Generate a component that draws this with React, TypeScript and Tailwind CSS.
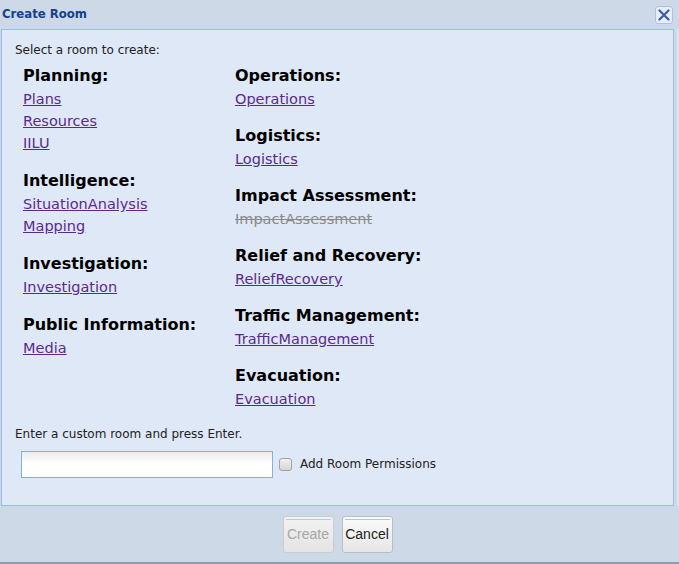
import React from "react";

const font = { fontFamily: "'DejaVu Sans', sans-serif" };

type Group = { title: string; links: { label: string; disabled?: boolean }[] };

const left: Group[] = [
  { title: "Planning:", links: [{ label: "Plans" }, { label: "Resources" }, { label: "IILU" }] },
  { title: "Intelligence:", links: [{ label: "SituationAnalysis" }, { label: "Mapping" }] },
  { title: "Investigation:", links: [{ label: "Investigation" }] },
  { title: "Public Information:", links: [{ label: "Media" }] },
];

const right: Group[] = [
  { title: "Operations:", links: [{ label: "Operations" }] },
  { title: "Logistics:", links: [{ label: "Logistics" }] },
  { title: "Impact Assessment:", links: [{ label: "ImpactAssessment", disabled: true }] },
  { title: "Relief and Recovery:", links: [{ label: "ReliefRecovery" }] },
  { title: "Traffic Management:", links: [{ label: "TrafficManagement" }] },
  { title: "Evacuation:", links: [{ label: "Evacuation" }] },
];

function GroupBlock({ g, wide }: { g: Group; wide?: boolean }) {
  return (
    <div className={wide ? "mb-[15px] flex flex-col items-start" : "mb-[14px] flex flex-col items-start"}>
      <div className="text-[16px] font-bold leading-[24px] text-black">{g.title}</div>
      {g.links.map((l) =>
        l.disabled ? (
          <span key={l.label} className="text-[14.5px] leading-[22px] text-[#8a8a8a] line-through">
            {l.label}
          </span>
        ) : (
          <a key={l.label} href="#" className="text-[14.5px] leading-[22px] text-[#5b2a8e] underline">
            {l.label}
          </a>
        )
      )}
    </div>
  );
}

export default function App() {
  return (
    <div className="w-[679px] h-[564px] bg-[#cdd9e7] flex flex-col overflow-hidden" style={font}>
      {/* title bar */}
      <div className="h-[29px] flex items-start justify-between">
        <div
          className="pl-[2px] pt-[6px] text-[13px] font-bold leading-[16px] text-[#15428b]"
          style={{ fontFamily: "'DejaVu Sans Condensed', 'DejaVu Sans', sans-serif" }}
        >
          Create Room
        </div>
        <div className="mt-[6px] mr-[6px] w-[18px] h-[18px] rounded-[3px] border border-[#a9c1e3] bg-[#e6edf8] flex items-center justify-center">
          <svg width="12" height="12" viewBox="0 0 12 12">
            <path d="M1.5 1.5 L10.5 10.5 M10.5 1.5 L1.5 10.5" stroke="#3d5d9e" strokeWidth="2.2" strokeLinecap="round" />
          </svg>
        </div>
      </div>
      {/* panel */}
      <div className="flex">
        <div className="ml-[1px] w-[673px] h-[477px] border border-[#99bbe8] bg-[#dfe8f6] flex flex-col pl-[13px] pt-[13px]">
          <div className="text-[12px] leading-[15px] text-[#222]">Select a room to create:</div>
          <div className="mt-[6px] pl-[8px] flex">
            <div className="w-[212px] flex flex-col">
              {left.map((g) => (
                <GroupBlock key={g.title} g={g} wide />
              ))}
            </div>
            <div className="flex flex-col">
              {right.map((g) => (
                <GroupBlock key={g.title} g={g} />
              ))}
            </div>
          </div>
          <div className="mt-[3px] text-[12px] leading-[15px] text-[#222]">Enter a custom room and press Enter.</div>
          <div className="mt-[9px] ml-[6px] flex items-center">
            <input
              type="text"
              className="w-[252px] h-[27px] border border-[#85b0dc] bg-[linear-gradient(to_bottom,#e9eaeb,#ffffff_45%)] outline-none"
            />
            <span className="ml-[6px] w-[13px] h-[13px] rounded-[3px] border border-[#a3a3a3] bg-[linear-gradient(to_bottom,#f0f0f0,#d6d6d6)]" />
            <span className="ml-[8px] text-[12px] leading-[15px] text-[#222]">Add Room Permissions</span>
          </div>
        </div>
        <div className="ml-[3px] w-[2px] bg-[#dbe4ef]" />
      </div>
      {/* footer */}
      <div className="flex-1 flex justify-center pt-[10px] pr-[4px] gap-[8px] border-b-[2px] border-[#8c9bb0]">
        <button
          className="relative w-[51px] h-[37px] rounded-[3px] border border-[#c9ccd0] bg-[linear-gradient(to_bottom,#f2f2f2,#e4e4e4)] text-[14px] text-[#a6a6a6]"
          style={{ fontFamily: "'Liberation Sans', Arial, sans-serif" }}
        >
          <span className="absolute left-[2px] right-[2px] top-[2px] h-px bg-[#b4cdee]" />
          Create
        </button>
        <button
          className="relative w-[51px] h-[37px] rounded-[3px] border border-[#b9bcc0] bg-[linear-gradient(to_bottom,#fbfbfb,#e6e6e6)] text-[14px] text-[#222]"
          style={{ fontFamily: "'Liberation Sans', Arial, sans-serif" }}
        >
          <span className="absolute left-[2px] right-[2px] top-[2px] h-px bg-[#a9c6ec]" />
          Cancel
        </button>
      </div>
    </div>
  );
}
